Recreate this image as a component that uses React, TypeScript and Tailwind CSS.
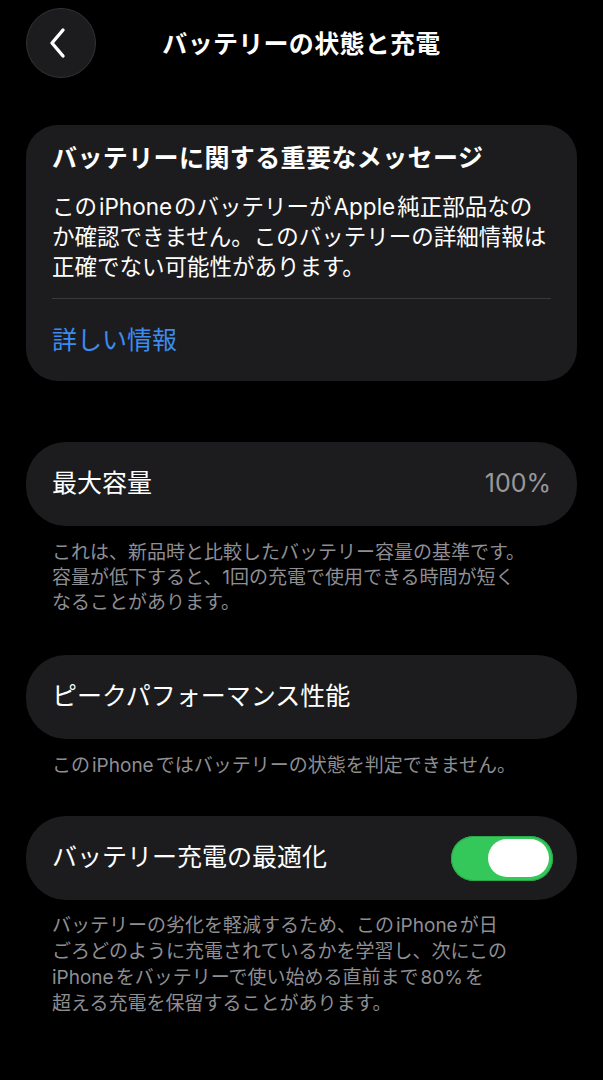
import React from "react";

const font = { fontFamily: '"Inter", "Noto Sans CJK JP", sans-serif' };

// latin words get a small gap from surrounding kana, like iOS does
const L = ({ children }: { children: React.ReactNode }) => <span className="mx-[2px]">{children}</span>;

const Toggle = () => (
  <div className="w-[102px] h-[45px] rounded-full bg-[#34c759] flex items-center justify-end px-[4px] shadow-[inset_0_0_0_1px_#2aa84a]">
    <div className="w-[61px] h-[38px] rounded-full bg-white" />
  </div>
);

const App = () => {
  return (
    <div className="min-h-[1080px] w-full bg-black text-white" style={font}>
      {/* header */}
      <div className="relative h-[88px] flex items-center justify-center">
        <button className="absolute left-[26px] top-[8px] w-[70px] h-[70px] rounded-full bg-[#1c1c1e] border border-[#333335] flex items-center justify-center">
          <svg width="22" height="32" viewBox="0 0 22 32" fill="none" className="-ml-[6px]">
            <path d="M16 3 L5 16 L16 29" stroke="white" strokeWidth="3.4" strokeLinecap="round" strokeLinejoin="round" />
          </svg>
        </button>
        <h1 className="text-[25px] font-semibold leading-[30px] tracking-[0.3px]">バッテリーの状態と充電</h1>
      </div>

      <div className="px-[26px]">
        {/* important message card */}
        <div className="mt-[37px] bg-[#1c1c1e] rounded-[32px] px-[26px] pt-[18px] pb-[26px]">
          <h2 className="text-[25px] font-bold leading-[30px] tracking-[0.4px] whitespace-nowrap">バッテリーに関する重要なメッセージ</h2>
          <p className="mt-[19px] text-[22.5px] leading-[30px] whitespace-nowrap">
            この<L>iPhone</L>のバッテリーが<L>Apple</L>純正部品なの
            <br />
            か確認できません。このバッテリーの詳細情報は
            <br />
            正確でない可能性があります。
          </p>
          <div className="mt-[16px] h-px bg-[#3a3a3c]" />
          <div className="mt-[26px] text-[25px] leading-[30px] text-[#3b8cf2]">詳しい情報</div>
        </div>

        {/* max capacity */}
        <div className="mt-[61px] h-[84px] bg-[#1c1c1e] rounded-[40px] px-[26px] flex items-center justify-between">
          <span className="text-[25px]">最大容量</span>
          <span className="text-[25px] text-[#98989d]">100%</span>
        </div>
        <p className="mt-[14px] px-[26px] text-[19px] leading-[25px] text-[#8e8e93] whitespace-nowrap">
          これは、新品時と比較したバッテリー容量の基準です。
          <br />
          容量が低下すると、1回の充電で使用できる時間が短く
          <br />
          なることがあります。
        </p>

        {/* peak performance */}
        <div className="mt-[40px] h-[84px] bg-[#1c1c1e] rounded-[40px] px-[26px] flex items-center">
          <span className="text-[25px]">ピークパフォーマンス性能</span>
        </div>
        <p className="mt-[14px] px-[26px] text-[19px] leading-[25px] text-[#8e8e93] whitespace-nowrap">
          この<L>iPhone</L>ではバッテリーの状態を判定できません。
        </p>

        {/* optimized charging */}
        <div className="mt-[38px] h-[84px] bg-[#1c1c1e] rounded-[40px] pl-[26px] pr-[24px] flex items-center justify-between">
          <span className="text-[25px]">バッテリー充電の最適化</span>
          <Toggle />
        </div>
        <p className="mt-[13px] px-[26px] text-[19px] leading-[26px] text-[#8e8e93] whitespace-nowrap">
          バッテリーの劣化を軽減するため、この<L>iPhone</L>が日
          <br />
          ごろどのように充電されているかを学習し、次にこの
          <br />
          <span className="mr-[2px]">iPhone</span>をバッテリーで使い始める直前まで<L>80%</L>を
          <br />
          超える充電を保留することがあります。
        </p>
      </div>
    </div>
  );
};

export default App;
